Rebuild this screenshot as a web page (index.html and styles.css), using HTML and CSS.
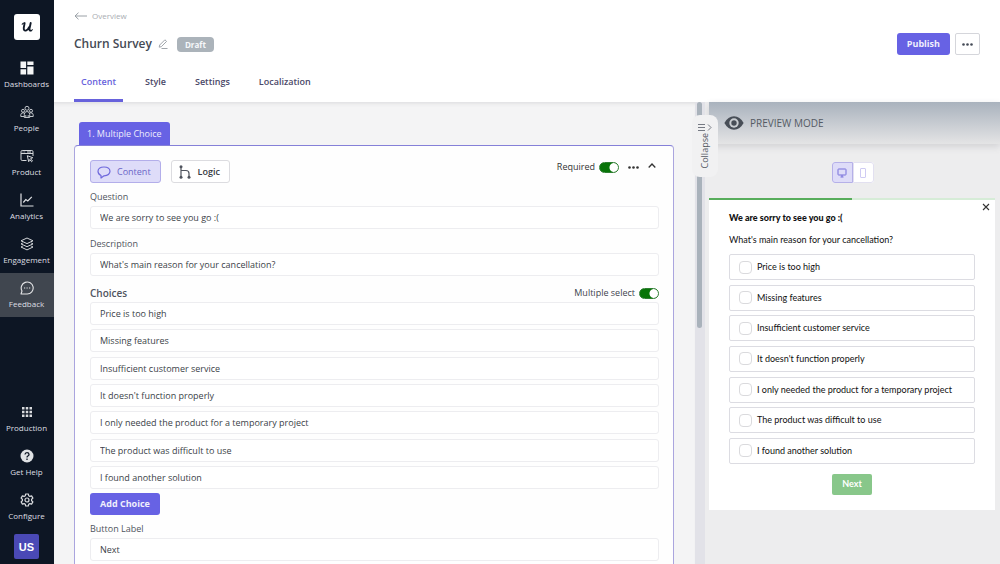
FILE: index.html
```html
<!DOCTYPE html>
<html lang="en">
<head>
<meta charset="utf-8">
<meta name="viewport" content="width=device-width, initial-scale=1">
<title>Churn Survey</title>
<link rel="stylesheet" href="styles.css">
</head>
<body>
<div class="app">
  <nav class="sidebar" aria-label="Main">
    <a class="logo" href="#" aria-label="Home">
      <svg width="26" height="26" viewBox="0 0 26 26" fill="none" stroke="#111a28" stroke-linecap="round" stroke-linejoin="round"><path stroke-width="1.9" d="M10.6 9.2 9.8 13.6Q9.4 17 11.9 16.6 14 16 15 13.3M16.7 9 15.5 14.5Q15.200 16.9 16.900 16.600"/><path stroke-width="1.1" d="M8.200 10.200Q9 9 10.600 9M16.900 16.600Q17.800 16.500 18.300 15.700"/></svg>
    </a>
    <div class="nav-group">
      <a class="nav-item" href="#"><svg width="14" height="14" viewBox="0 0 14 14" fill="#f4f5f6"><path d="M.5.5h5.600v6.500H.5zM7.300.5h6.200v3.600H7.300zM.5 8.300h5.600v5.200H.5zM7.300 5.400h6.200v8.100H7.300z"/></svg>Dashboards</a>
      <a class="nav-item" href="#"><svg width="14" height="14" viewBox="0 0 14 14" fill="none" stroke="#d4d7da" stroke-width=".9"><circle cx="7" cy="3.300" r="2"/><circle cx="3" cy="5.800" r="1.500"/><circle cx="11" cy="5.800" r="1.500"/><path d="M4.300 12.500V9.300Q4.500 6.500 7 6.500t2.700 2.800v3.200zM4.300 11.500H.8V9.800Q1 7.800 3 7.800q1 0 1.500.6M9.700 11.500h3.500V9.800Q13 7.800 11 7.800q-1 0-1.500.6M5.800 12V10M8.200 12V10"/></svg>People</a>
      <a class="nav-item" href="#"><svg width="14" height="14" viewBox="0 0 14 14" fill="none" stroke="#d4d7da" stroke-width="1"><path d="M6.500 11.500H2.200Q1 11.500 1 10.300V2.700Q1 1.500 2.200 1.500h9.600Q13 1.500 13 2.700V7M1 4.500h12M2.600 3h.8M4.400 3h.8M7 3h4"/><path d="m7.300 6.700 5.500 2-2.300 1 2 2.300-.8.800-2.100-2.200-.9 2.100z"/></svg>Product</a>
      <a class="nav-item" href="#"><svg width="14" height="14" viewBox="0 0 14 14" fill="none" stroke="#dfe1e4" stroke-width="1.200"><path d="M1 .5v12.500h12.500M3.300 9.500l2.500-3 2 1.500 4-4.200"/></svg>Analytics</a>
      <a class="nav-item" href="#"><svg width="14" height="14" viewBox="0 0 14 14" fill="none" stroke="#d4d7da" stroke-width="1" stroke-linejoin="round"><path d="m7 1 6 2.800-6 2.800-6-2.800zM2.800 6 1 6.900l6 2.800 6-2.800L11.200 6M2.800 9.100 1 10l6 2.900 6-2.900-1.800-.9"/></svg>Engagement</a>
      <a class="nav-item active" href="#" aria-current="page"><svg width="14" height="14" viewBox="0 0 14 14" fill="none" stroke="#e3e4e6" stroke-width="1.100" stroke-linejoin="round"><path d="M1 13h6.200A6 6 0 1 0 2 10z"/><path stroke-width="1.200" d="M4 7h1.200M6.500 7h1.200M9 7h1.200"/></svg>Feedback</a>
    </div>
    <div class="nav-group nav-bottom">
      <a class="nav-item" href="#"><svg width="14" height="14" viewBox="0 0 14 14" fill="#d9dbde"><path d="M2 2h2.500v2.500H2zM5.750 2h2.500v2.500h-2.500zM9.500 2H12v2.500H9.500zM2 5.750h2.500v2.500H2zM5.750 5.750h2.500v2.500h-2.500zM9.500 5.750H12v2.500H9.500zM2 9.500h2.500V12H2zM5.750 9.500h2.500V12h-2.500zM9.500 9.500H12V12H9.500z"/></svg>Production</a>
      <a class="nav-item" href="#"><svg width="14" height="14" viewBox="0 0 14 14" fill="none" stroke="#101927" stroke-width="1.300"><circle cx="7" cy="7" r="6.500" fill="#e0e2e5" stroke="none"/><path d="M5 5.500Q5.100 3.600 7 3.600t2 1.800Q9 6.500 7.900 7 7 7.500 7 8.500M7 9.500v1.400"/></svg>Get Help</a>
      <a class="nav-item" href="#"><svg width="14" height="14" viewBox="0 0 14 14" fill="none" stroke="#d9dbde" stroke-width="1.200" stroke-linejoin="round"><path d="M5.700 1h2.600l.4 1.700 1.200.7 1.700-.5 1.300 2.200L11.600 6.300v1.400l1.300 1.200-1.300 2.200-1.700-.5-1.200.7-.4 1.700H5.700l-.4-1.700-1.200-.7-1.700.5-1.300-2.200 1.300-1.200V6.300L1.100 5.100l1.300-2.200 1.700.5 1.200-.7z"/><circle cx="7" cy="7" r="2"/></svg>Configure</a>
    </div>
    <button class="avatar" type="button">US</button>
  </nav>

  <div class="page">
    <header class="header">
      <a class="back" href="#"><svg width="14" height="8" viewBox="0 0 14 8" fill="none" stroke="#9aa0a6"><path d="M13 4H1M4.500.7 1 4l3.500 3.300"/></svg>Overview</a>
      <div class="title-row">
        <h1 class="title">Churn Survey</h1>
        <button class="edit" type="button" aria-label="Rename"><svg width="10" height="10" viewBox="0 0 10 10" fill="none" stroke="#a0a5ab" stroke-width="1"><path d="M1.200 8.200 1.700 6 6.900.8l1.700 1.600-5.300 5.300zM3.500 9.500h6"/></svg></button>
        <span class="badge">Draft</span>
        <div class="header-actions">
          <button class="btn" type="button">Publish</button>
          <button class="more-box" type="button" aria-label="More"><svg width="11" height="3" viewBox="0 0 11 3" fill="#444a56"><circle cx="1.500" cy="1.500" r="1.300"/><circle cx="5.500" cy="1.500" r="1.300"/><circle cx="9.500" cy="1.500" r="1.300"/></svg></button>
        </div>
      </div>
      <nav class="tabs" aria-label="Survey">
        <a class="tab selected" href="#">Content</a>
        <a class="tab" href="#">Style</a>
        <a class="tab" href="#">Settings</a>
        <a class="tab" href="#">Localization</a>
      </nav>
    </header>

    <div class="workspace">
      <main class="editor">
        <div class="question-tab">1. Multiple Choice</div>
        <section class="card">
          <div class="toolbar">
            <button class="mode mode-on" type="button"><svg width="14" height="14" viewBox="0 0 14 14" fill="none" stroke="#7069dc" stroke-width="1.200" stroke-linejoin="round"><path d="M4 10.500Q1 9.300 1 6.300 1.200 2 7 2t6 4.300Q12.800 10.500 7 10.800L4 13z"/></svg>Content</button>
            <button class="mode" type="button"><svg width="14" height="14" viewBox="0 0 14 14" fill="none" stroke="#50545e" stroke-width="1.200"><path d="M3 1.500v11M3 5.500h5q3 0 3 3v4"/><g fill="#50545e" stroke="none"><circle cx="3" cy="1.800" r="1.500"/><circle cx="3" cy="12.200" r="1.500"/><circle cx="11" cy="12.200" r="1.500"/></g></svg>Logic</button>
            <div class="toolbar-end">
              <label class="switch-label strong">Required<input class="switch" type="checkbox" role="switch" checked></label>
              <button class="icon-btn" type="button" aria-label="More"><svg width="11" height="3" viewBox="0 0 11 3" fill="#333"><circle cx="1.500" cy="1.500" r="1.300"/><circle cx="5.500" cy="1.500" r="1.300"/><circle cx="9.500" cy="1.500" r="1.300"/></svg></button>
              <button class="icon-btn caret" type="button" aria-label="Collapse question"><svg width="8" height="5" viewBox="0 0 8 5" fill="none" stroke="#333" stroke-width="1.300"><path d="m.7 4.500 3.300-3.500 3.300 3.500"/></svg></button>
            </div>
          </div>
          <label class="label" for="question">Question</label>
          <input class="field" id="question" type="text" value="We are sorry to see you go :(">
          <label class="label" for="description">Description</label>
          <input class="field" id="description" type="text" value="What's main reason for your cancellation?">
          <div class="choices-head">
            <h2 class="choices-title">Choices</h2>
            <label class="switch-label">Multiple select<input class="switch" type="checkbox" role="switch" checked></label>
          </div>
          <div class="choices">
            <input class="field" type="text" aria-label="Choice 1" value="Price is too high">
            <input class="field" type="text" aria-label="Choice 2" value="Missing features">
            <input class="field" type="text" aria-label="Choice 3" value="Insufficient customer service">
            <input class="field" type="text" aria-label="Choice 4" value="It doesn't function properly">
            <input class="field" type="text" aria-label="Choice 5" value="I only needed the product for a temporary project">
            <input class="field" type="text" aria-label="Choice 6" value="The product was difficult to use">
            <input class="field" type="text" aria-label="Choice 7" value="I found another solution">
          </div>
          <button class="btn add" type="button">Add Choice</button>
          <label class="label" for="button-label">Button Label</label>
          <input class="field" id="button-label" type="text" value="Next">
        </section>
      </main>

      <div class="rail"><div class="thumb"></div>
        <button class="collapse" type="button"><svg width="14" height="9" viewBox="0 0 14 9" fill="none" stroke="#666b76" stroke-width=".9"><path d="M0 1.500h7M0 4.500h7M0 7.500h7M10 1.500l3 3-3 3"/></svg><span class="collapse-text">Collapse</span></button>
      </div>

      <aside class="preview">
        <div class="preview-head"><svg width="20" height="14" viewBox="0 0 20 14"><path fill="#484e57" d="M10 .3Q16 .3 19.600 7 16 13.700 10 13.700T.4 7Q4 .3 10 .3z"/><circle cx="10" cy="7" r="4.700" fill="#c9cdd1"/><circle cx="10" cy="7" r="2.700" fill="#484e57"/></svg>PREVIEW MODE</div>
        <div class="devices">
          <button class="device device-on" type="button" aria-label="Desktop"><svg width="10" height="10" viewBox="0 0 10 10" fill="none" stroke="#766fda"><rect x="1" y="1" width="8" height="6" rx=".6"/><path d="M3.500 9h3M5 7v2"/></svg></button>
          <button class="device" type="button" aria-label="Mobile"><svg width="8" height="10" viewBox="0 0 8 10" fill="none" stroke="#cfcbf3"><rect x="1.500" y=".5" width="5" height="9" rx=".5"/></svg></button>
        </div>
        <form class="survey">
          <div class="progress"><div class="progress-bar"></div></div>
          <button class="close" type="button" aria-label="Close"><svg width="8" height="8" viewBox="0 0 8 8" fill="none" stroke="#333" stroke-width="1.100"><path d="m1 1 6 6M7 1 1 7"/></svg></button>
          <div class="survey-body">
            <h2 class="survey-title">We are sorry to see you go :(</h2>
            <p class="survey-text">What's main reason for your cancellation?</p>
            <div class="options">
              <label class="option"><input class="tick" type="checkbox">Price is too high</label>
              <label class="option"><input class="tick" type="checkbox">Missing features</label>
              <label class="option"><input class="tick" type="checkbox">Insufficient customer service</label>
              <label class="option"><input class="tick" type="checkbox">It doesn't function properly</label>
              <label class="option"><input class="tick" type="checkbox">I only needed the product for a temporary project</label>
              <label class="option"><input class="tick" type="checkbox">The product was difficult to use</label>
              <label class="option"><input class="tick" type="checkbox">I found another solution</label>
            </div>
            <button class="next" type="button">Next</button>
          </div>
        </form>
      </aside>
    </div>
  </div>
</div>
</body>
</html>
```
FILE: styles.css
```css
* { box-sizing: border-box; }

body {
  margin: 0;
  font: 9px/12px "Open Sans", "Noto Sans", sans-serif;
  color: #40444d;
  background: #fff;
}

a { color: inherit; text-decoration: none; }
button, input { font: inherit; color: inherit; margin: 0; }
button { padding: 0; border: 0; background: none; cursor: pointer; }
svg { display: block; flex: none; }
h1, h2, p { margin: 0; }

.app { display: flex; height: 100vh; overflow: hidden; }

/* Sidebar */
.sidebar {
  flex: none;
  width: 54px;
  display: flex;
  flex-direction: column;
  align-items: center;
  padding: 14px 1px 5px 0;
  background: #0d1624;
}
.logo { width: 26px; height: 26px; border-radius: 3px; background: #fff; }
.nav-group { width: 54px; margin-top: 13px; display: flex; flex-direction: column; }
.nav-bottom { margin-top: auto; margin-bottom: 5px; }
.nav-item {
  height: 44px;
  display: flex;
  flex-direction: column;
  align-items: center;
  justify-content: center;
  gap: 4px;
  font-size: 8px;
  line-height: 10px;
  color: #dddfe2;
}
.nav-item.active { background: #40464f; }
.avatar {
  width: 25px;
  height: 25px;
  border-radius: 2px;
  background: #4a49b5;
  color: #fff;
  font: bold 11px/14px "Liberation Sans", Arial, sans-serif;
}

/* Header */
.page { flex: 1; min-width: 0; display: flex; flex-direction: column; }
.header { flex: none; padding: 10px 20px 0; background: #fff; }
.back { display: inline-flex; align-items: center; gap: 4px; color: #a9adb2; font-size: 8px; }
.title-row { display: flex; align-items: center; margin-top: 10px; }
.title { font-size: 12px; line-height: 16px; font-weight: 600; color: #454a54; }
.edit { margin: 0 9px 0 6px; }
.badge {
  padding: 2px 8px;
  border-radius: 4px;
  background: #abb3ba;
  color: #f6f8fa;
  font-size: 8px;
  line-height: 11px;
  font-weight: 700;
}
.header-actions { display: flex; gap: 5px; margin-left: auto; }
.btn {
  padding: 5px 10px;
  border-radius: 3px;
  background: #6762e4;
  color: #f0effd;
  font-weight: 700;
  line-height: 12px;
}
.more-box {
  width: 25px;
  display: flex;
  align-items: center;
  justify-content: center;
  border: 1px solid #d5d6db;
  border-radius: 2px;
}
.tabs { display: flex; gap: 15px; margin-top: 13px; }
.tab {
  padding: 8px 7px 11px;
  border-bottom: 3px solid transparent;
  color: #4a4868;
  font-weight: 600;
}
.tab.selected { color: #6762dc; border-color: #6762dc; }

/* Editor */
.workspace { flex: 1; min-height: 0; display: flex; background: #f4f4f5; }
.editor {
  flex: 1;
  min-width: 0;
  overflow: hidden;
  padding: 20px 21px 0 20px;
  box-shadow: inset 0 4px 4px -3px #d9d9db;
}
.question-tab {
  width: fit-content;
  margin-left: 5px;
  padding: 6px 8px 5px;
  border-radius: 3px 3px 0 0;
  background: #6762e4;
  color: #eeedfd;
  font-weight: 500;
}
.card {
  padding: 14px 14px 30px 15px;
  border: 1px solid #aaa5de;
  border-top-color: #8580d8;
  border-radius: 4px;
  background: #fefefe;
}
.toolbar { display: flex; align-items: center; gap: 10px; margin-bottom: 8px; }
.mode {
  height: 23px;
  display: flex;
  align-items: center;
  gap: 6px;
  padding: 0 9px 0 6px;
  border: 1px solid #dcdce0;
  border-radius: 3px;
  background: #fff;
  font-weight: 600;
  color: #363a42;
}
.mode-on { background: #dedcf9; border-color: #b3aeea; color: #6b65c8; font-weight: 500; }
.toolbar-end { align-self: flex-start; display: flex; align-items: center; gap: 9px; margin: 1px 3px 0 auto; }
.icon-btn { display: flex; }
.caret { padding-bottom: 3px; }
.switch-label { display: flex; align-items: center; gap: 4px; }
.strong { font-weight: 500; color: #333; }
.switch {
  appearance: none;
  width: 20px;
  height: 11px;
  border: 1px solid #2f7f32;
  border-radius: 6px;
  background: radial-gradient(circle at 14px 50%, #fff 4px, #087408 5px);
}
.switch:not(:checked) { background: radial-gradient(circle at 4px 50%, #fff 4px, #999 5px); }
.label { display: block; padding-bottom: 3px; color: #4f545d; font-weight: 500; }
.field {
  display: block;
  width: 100%;
  height: 23px;
  padding: 0 9px;
  border: 1px solid #ededf0;
  border-radius: 3px;
  background: #fff;
  color: #3b3f48;
}
.field + .label { margin-top: 9px; }
.choices-head { display: flex; align-items: center; justify-content: space-between; margin-top: 10px; }
.choices-title { font-size: 10px; line-height: 14px; font-weight: 600; color: #50555e; }
.choices { display: flex; flex-direction: column; justify-content: space-between; min-height: 187px; margin-top: 2px; }
.add { display: block; margin: 4px 0 8px; }

/* Scroll rail with collapse handle */
.rail { position: relative; flex: none; width: 10px; background: #e2e2e8; }
.thumb { width: 5px; height: 49%; margin-left: 2px; border-radius: 3px; background: #a9b2bb; }
.collapse {
  position: absolute;
  top: 13px;
  left: -3px;
  width: 26px;
  height: 62px;
  display: flex;
  flex-direction: column;
  align-items: center;
  justify-content: center;
  gap: 1px;
  border-radius: 8px;
  background: #f1f1f2;
  color: #555a63;
  font-weight: 500;
}
.collapse-text { writing-mode: vertical-rl; transform: rotate(180deg); }

/* Preview */
.preview { flex: none; width: 295px; min-height: 0; background: #ededee; }
.preview-head {
  display: flex;
  align-items: center;
  gap: 6px;
  height: 42px;
  margin-left: 4px;
  padding-left: 15px;
  background: linear-gradient(#a9b2bd, #e4e4e5);
  box-shadow: 0 3px 7px #d2d2d5;
  color: #555b64;
  font-size: 10px;
}
.devices {
  display: flex;
  width: 42px;
  height: 21px;
  margin: 18px auto 15px;
  border-radius: 3px;
  background: #fff;
}
.device {
  flex: 1;
  display: flex;
  align-items: center;
  justify-content: center;
  border: 1px solid #e2e0f0;
  border-radius: 0 3px 3px 0;
}
.device-on { background: #dedcf8; border-color: #b5b0e8; border-radius: 3px 0 0 3px; }
.survey {
  position: relative;
  margin: 0 5px 0 4px;
  background: #fff;
  color: #111;
  font-family: Lato, sans-serif;
}
.progress { height: 2px; background: #d6ecd7; }
.progress-bar { width: 50%; height: 100%; background: #58ad5b; }
.close { position: absolute; top: 5px; right: 5px; }
.survey-body { padding: 11px 20px 15px; }
.survey-title { font-size: 9px; line-height: 14px; font-weight: 900; color: #111; }
.survey-text { margin: 9px 0 8px; font-weight: 400; }
.options { display: flex; flex-direction: column; justify-content: space-between; min-height: 210px; }
.option {
  height: 26px;
  display: flex;
  align-items: center;
  gap: 5px;
  padding: 0 9px;
  border: 1px solid #dcdce2;
  border-radius: 2px;
  font-weight: 400;
}
.tick {
  appearance: none;
  width: 13px;
  height: 13px;
  border: 1px solid #dadadd;
  border-radius: 4px;
  background: #fff;
}
.next {
  display: block;
  margin: 10px auto 0;
  padding: 4px 10px 5px;
  border-radius: 2px;
  background: #88c78a;
  color: #fff;
  font-weight: 700;
}
```
